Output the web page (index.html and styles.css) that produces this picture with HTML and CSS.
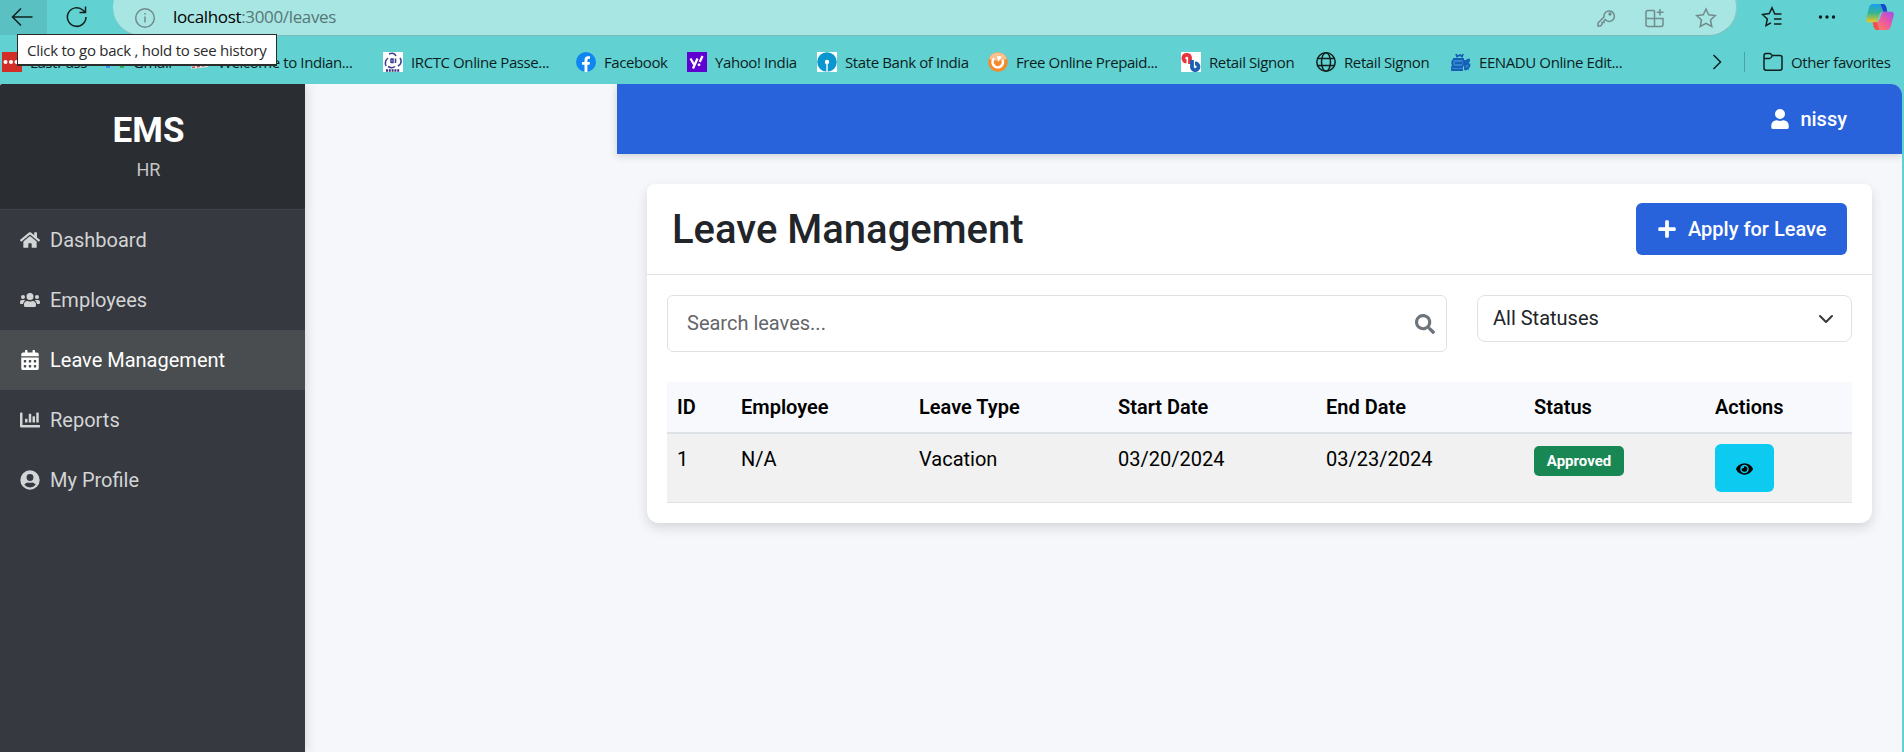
FILE: index.html
```html
<!DOCTYPE html>
<html lang="en">
<head>
<meta charset="utf-8">
<title>Leave Management</title>
<link rel="stylesheet" href="styles.css">
</head>
<body>
<div class="browser">
  <div class="toolbar">
    <div class="back"><svg width="22" height="22" viewBox="0 0 22 22" class="line"><path d="M21.500 11H2M10 2.500L1.500 11L10 19.500"/></svg></div>
    <svg class="reload line" width="22" height="22" viewBox="0 0 22 22"><path d="M20 11A9.300 9.300 0 1 1 17 4.200L19.200 6.200M19.500 .5V6.500H13.500"/></svg>
    <div class="address">
      <svg class="info" width="22" height="22" viewBox="0 0 22 22"><circle cx="11" cy="11" r="9.300"/><path d="M11 9.500V15.500M11 6V7.600"/></svg>
      <span class="url"><b>localhost</b>:3000/leaves</span>
      <div class="address-icons">
        <svg width="18" height="18" viewBox="0 0 18 18"><path d="M8.200 10.600L7 11.800V13.500H5V15.500L3.500 17H1V14L7 8A5.200 5.200 0 1 1 8.200 10.600Z"/><circle cx="13" cy="5" r=".9"/></svg>
        <svg width="20" height="20" viewBox="0 0 20 20"><path d="M9.500 2.500H3Q1 2.500 1 4.500V16.500Q1 18.500 3 18.500H16Q18 18.500 18 16.500V10.500H1M9.500 2.500V18.500M15 1V7.500M11.800 4.200H18.500"/></svg>
        <svg width="22" height="22" viewBox="0 0 22 22"><path d="M11 2L13.700 7.800L20.300 8.500L15.500 13L16.800 19.500L11 16.300L5.200 19.500L6.500 13L1.700 8.500L8.300 7.800Z"/></svg>
      </div>
    </div>
    <svg class="fav line" width="22" height="22" viewBox="0 0 22 22"><path d="M20.500 8H13.800L11 1.800L8.200 7.600L1.500 8.500L6.300 13L5 19.500L10 16.800M13 13H20.500M13 18H20.500"/></svg>
    <svg class="more" width="18" height="6" viewBox="0 0 18 6"><circle cx="2.500" cy="3" r="1.700"/><circle cx="9" cy="3" r="1.700"/><circle cx="15.500" cy="3" r="1.700"/></svg>
    <svg class="copilot" width="28" height="26" viewBox="0 0 29 27">
      <defs>
        <linearGradient id="ca" x1="0" y1="0" x2="0" y2="1"><stop offset="0" stop-color="#1b9df0"/><stop offset=".5" stop-color="#39b58f"/><stop offset="1" stop-color="#f5c620"/></linearGradient>
        <linearGradient id="cb" x1="1" y1="0" x2="0" y2="1"><stop offset="0" stop-color="#a04bf0"/><stop offset=".5" stop-color="#ef5a9c"/><stop offset="1" stop-color="#ff8a4a"/></linearGradient>
      </defs>
      <path d="M7 0H18Q20 0 21 3L22 8H18Q15 8 14 11L12 17Q11 19 9 19H3Q-1 19 .5 14L3 4Q4 0 7 0Z" fill="url(#ca)"/>
      <path d="M15 0H18Q20 0 21 3L22 8H18Z" fill="#1748c8"/>
      <path d="M22 27H11Q9 27 8 24L7 19H10Q13 19 14 16L16 10Q17 8 19 8H26Q30 8 28.500 13L26 22Q25 27 22 27Z" fill="url(#cb)"/>
      <path d="M14 27H11Q9 27 8 24L7 19H11Z" fill="#f0504a"/>
    </svg>
  </div>
  <div class="bookmarks">
    <div class="bm bm-lastpass"><svg width="20" height="20"><path fill="#d32d27" d="M0 0H20V20H0Z"/><g fill="#fff"><circle cx="3.500" cy="10" r="2"/><circle cx="9" cy="10" r="2"/><circle cx="14.500" cy="10" r="2"/></g></svg><span>LastPass</span></div>
    <div class="bm bm-gmail"><svg width="20" height="20"><path fill="#4285f4" d="M1 4H5V16H1Z"/><path fill="#34a853" d="M15 4H19V16H15Z"/><path fill="none" stroke="#ea4335" stroke-width="4" d="M2 5L10 11L18 5"/></svg><span>Gmail</span></div>
    <div class="bm bm-rail"><svg width="20" height="20"><path fill="#e8e0e0" d="M2 10L18 6V15L1 17Z"/><path stroke="#a55" stroke-width="1.500" stroke-dasharray="3 2" d="M2 15.500L18 13"/></svg><span>Welcome to Indian...</span></div>
    <div class="bm bm-irctc"><svg width="20" height="20"><path fill="#fff" d="M0 0H20V20H0Z"/><g fill="none" stroke="#3a3f92" stroke-width="1.500"><path d="M6 2Q11 0 13 4M3 14Q1 9 5 6M17 6Q20 11 15 14M5 14.500Q9 17 12 14.500"/><path d="M8 6.500V11M8 7H10V10.500H8M12.500 6.500V11"/></g><path stroke="#34347e" stroke-width="2.500" stroke-dasharray="2 .8" d="M3 18.500H17"/></svg><span>IRCTC Online Passe...</span></div>
    <div class="bm bm-fb"><svg width="20" height="20"><circle cx="10" cy="10" r="10" fill="#0f86f2"/><path fill="#fff" d="M8.500 20V12.800H6V10H8.500V8Q8.500 4.200 12 4.200H14V6.800H12.800Q11.400 6.800 11.400 8.300V10H14L13.500 12.800H11.400V20Z"/></svg><span>Facebook</span></div>
    <div class="bm bm-yahoo"><svg width="20" height="20"><path fill="#5f01d1" d="M0 0H20V20H0Z"/><path fill="none" stroke="#fff" stroke-width="2.300" d="M3.500 6.500L7 12.500M10.500 6.500L6 16.500M15.500 4L12.800 10"/><circle cx="12" cy="12.800" r="1.400" fill="#fff"/></svg><span>Yahoo! India</span></div>
    <div class="bm bm-sbi"><svg width="20" height="20"><path fill="#fff" d="M0 0H20V20H0Z"/><circle cx="10" cy="10" r="9.800" fill="#0a96cf"/><circle cx="10" cy="10" r="2.200" fill="#fff"/><path fill="#dff2fa" d="M9.200 11H10.800V20H9.200Z"/></svg><span>State Bank of India</span></div>
    <div class="bm bm-free"><svg width="20" height="20"><circle cx="10" cy="10" r="9.800" fill="#f58a2c"/><path fill="#fac08e" d="M1 7A9.500 9.500 0 0 1 19 7Q10 10 1 7Z"/><path fill="none" stroke="#fff" stroke-width="2.600" d="M6 6.500A5.200 5.200 0 1 0 14.500 8"/><path fill="#fff" d="M9 4L14 4.500L10 10Z"/></svg><span>Free Online Prepaid...</span></div>
    <div class="bm bm-retail1"><svg width="20" height="20"><path fill="#fff" d="M0 0H20V20H0Z"/><g fill="none" stroke-width="3.800"><path stroke="#e8333c" d="M5.500 9.500A3.300 3.300 0 1 1 9 5.500V12"/><path stroke="#1e5fb0" d="M11 8V14A3.300 3.300 0 1 0 14 11.500"/></g></svg><span>Retail Signon</span></div>
    <div class="bm bm-retail2"><svg width="20" height="20" class="globe"><circle cx="10" cy="10" r="9.200"/><ellipse cx="10" cy="10" rx="4.500" ry="9.200"/><path d="M1.800 6.500H18.200M1.800 13.500H18.200"/></svg><span>Retail Signon</span></div>
    <div class="bm bm-eenadu"><svg width="20" height="20"><path fill="#2f86cc" d="M2 7H12V18H2ZM14 8H18V18H14Z"/><g fill="none" stroke="#1560b6" stroke-width="1.800"><path d="M5 2L6 4.500L9 3L11 4.500L12 2M2 7H13M2 8Q0 12 3 15H11Q14 12 12 8M4 11H11M1 14V18H12M15 9Q19 6 18 9L15 12Q20 11 18 15L14 18M14 8V18"/></g></svg><span>EENADU Online Edit...</span></div>
    <svg class="chev line" width="10" height="16" viewBox="0 0 10 16"><path d="M1.500 1L8.500 8L1.500 15"/></svg>
    <i class="sep"></i>
    <div class="bm bm-other"><svg width="20" height="20" class="globe"><path d="M1 4Q1 1.500 3 1.500H7L9.500 3.500H17Q19 3.500 19 5.500V16Q19 18.200 17 18.200H3Q1 18.200 1 16ZM1 6.500H6.500Q8 6.500 9.500 3.500"/></svg><span>Other favorites</span></div>
  </div>
  <div class="tooltip"><span>Click to go back , hold to see history</span></div>
</div>
<div class="app">
  <aside class="sidebar">
    <div class="brand"><h1>EMS</h1><p>HR</p></div>
    <nav>
      <a><svg viewBox="0 0 576 512"><path d="M280 148L96 300v164a16 16 0 0 0 16 16h112a16 16 0 0 0 16-16v-96a16 16 0 0 1 16-16h64a16 16 0 0 1 16 16v96a16 16 0 0 0 16 16h112a16 16 0 0 0 16-16V300L296 148a12 12 0 0 0-16 0zM572 251l-84-69V44a12 12 0 0 0-12-12h-56a12 12 0 0 0-12 12v72L318 43a48 48 0 0 0-61 0L4 251a12 12 0 0 0-1 17l25 31a12 12 0 0 0 17 2L280 107a12 12 0 0 1 16 0l235 194a12 12 0 0 0 17-2l25-31a12 12 0 0 0-1-17z"/></svg>Dashboard</a>
      <a><svg viewBox="0 0 640 512"><path d="M96 224a64 64 0 1 0 0-128 64 64 0 0 0 0 128zm448 0a64 64 0 1 0 0-128 64 64 0 0 0 0 128zm32 32h-64c-18 0-34 7-45 18 40 22 69 62 75 110h66a32 32 0 0 0 32-32v-32a64 64 0 0 0-64-64zm-256 0a112 112 0 1 0 0-224 112 112 0 0 0 0 224zm77 32h-8a155 155 0 0 1-138 0h-8A115 115 0 0 0 128 403v29a48 48 0 0 0 48 48h288a48 48 0 0 0 48-48v-29a115 115 0 0 0-115-115zM173 274a64 64 0 0 0-45-18H64a64 64 0 0 0-64 64v32a32 32 0 0 0 32 32h66c6-48 35-88 75-110z"/></svg>Employees</a>
      <a class="active"><svg viewBox="0 0 448 512"><path fill-rule="evenodd" d="M0 464a48 48 0 0 0 48 48h352a48 48 0 0 0 48-48V192H0zM320 268a12 12 0 0 1 12-12h40a12 12 0 0 1 12 12v40a12 12 0 0 1-12 12h-40a12 12 0 0 1-12-12zm0 128a12 12 0 0 1 12-12h40a12 12 0 0 1 12 12v40a12 12 0 0 1-12 12h-40a12 12 0 0 1-12-12zM192 268a12 12 0 0 1 12-12h40a12 12 0 0 1 12 12v40a12 12 0 0 1-12 12h-40a12 12 0 0 1-12-12zm0 128a12 12 0 0 1 12-12h40a12 12 0 0 1 12 12v40a12 12 0 0 1-12 12h-40a12 12 0 0 1-12-12zM64 268a12 12 0 0 1 12-12h40a12 12 0 0 1 12 12v40a12 12 0 0 1-12 12H76a12 12 0 0 1-12-12zm0 128a12 12 0 0 1 12-12h40a12 12 0 0 1 12 12v40a12 12 0 0 1-12 12H76a12 12 0 0 1-12-12zM400 64h-48V16a16 16 0 0 0-16-16h-32a16 16 0 0 0-16 16v48H160V16a16 16 0 0 0-16-16h-32a16 16 0 0 0-16 16v48H48a48 48 0 0 0-48 48v48h448v-48a48 48 0 0 0-48-48z"/></svg>Leave Management</a>
      <a><svg viewBox="0 0 512 512"><path d="M333 320h38a13 13 0 0 0 13-13V173a13 13 0 0 0-13-13h-38a13 13 0 0 0-13 13v134a13 13 0 0 0 13 13zm96 0h38a13 13 0 0 0 13-13V77a13 13 0 0 0-13-13h-38a13 13 0 0 0-13 13v230a13 13 0 0 0 13 13zm-288 0h38a13 13 0 0 0 13-13v-70a13 13 0 0 0-13-13h-38a13 13 0 0 0-13 13v70a13 13 0 0 0 13 13zm96 0h38a13 13 0 0 0 13-13V109a13 13 0 0 0-13-13h-38a13 13 0 0 0-13 13v198a13 13 0 0 0 13 13zm259 64H64V80a16 16 0 0 0-16-16H16A16 16 0 0 0 0 80v336a32 32 0 0 0 32 32h464a16 16 0 0 0 16-16v-32a16 16 0 0 0-16-16z"/></svg>Reports</a>
      <a><svg viewBox="0 0 496 512"><path d="M248 8a248 248 0 1 0 0 496 248 248 0 0 0 0-496zm0 96a88 88 0 1 1 0 176 88 88 0 0 1 0-176zm0 344a192 192 0 0 1-146-68c18-35 55-60 97-60 6 0 22 8 49 8s43-8 49-8c43 0 79 25 97 60a192 192 0 0 1-146 68z"/></svg>My Profile</a>
    </nav>
  </aside>
  <main class="main">
    <header class="navbar"><svg viewBox="0 0 448 512"><path d="M224 256a128 128 0 1 0 0-256 128 128 0 0 0 0 256zm90 32h-17a174 174 0 0 1-146 0h-17A134 134 0 0 0 0 422v42a48 48 0 0 0 48 48h352a48 48 0 0 0 48-48v-42a134 134 0 0 0-134-134z"/></svg>nissy</header>
    <section class="card">
      <div class="card-head">
        <h2>Leave Management</h2>
        <button class="apply"><svg viewBox="0 0 448 512"><path d="M416 208H272V64a32 32 0 0 0-32-32h-32a32 32 0 0 0-32 32v144H32a32 32 0 0 0-32 32v32a32 32 0 0 0 32 32h144v144a32 32 0 0 0 32 32h32a32 32 0 0 0 32-32V304h144a32 32 0 0 0 32-32v-32a32 32 0 0 0-32-32z"/></svg>Apply for Leave</button>
      </div>
      <div class="card-body">
        <div class="filters">
          <div class="search"><span>Search leaves...</span><svg viewBox="0 0 512 512"><path fill-rule="evenodd" d="M505 443L405 343c-4-4-11-7-17-7h-16a208 208 0 1 0-36 36v16c0 6 3 13 7 17l100 100a24 24 0 0 0 34 0l28-28a24 24 0 0 0 0-34zM208 336a128 128 0 1 1 0-256 128 128 0 0 1 0 256z"/></svg></div>
          <div class="select"><span>All Statuses</span><svg viewBox="0 0 16 16"><path d="m2 5 6 6 6-6"/></svg></div>
        </div>
        <table>
          <colgroup><col class="c1"><col class="c2"><col class="c3"><col class="c4"><col class="c5"><col class="c6"><col class="c7"></colgroup>
          <thead><tr><th>ID</th><th>Employee</th><th>Leave Type</th><th>Start Date</th><th>End Date</th><th>Status</th><th>Actions</th></tr></thead>
          <tbody><tr><td>1</td><td>N/A</td><td>Vacation</td><td>03/20/2024</td><td>03/23/2024</td><td><span class="badge">Approved</span></td><td class="act"><button class="view"><svg viewBox="0 0 576 512"><path fill-rule="evenodd" d="M572 241C518 136 411 64 288 64S58 136 4 241a32 32 0 0 0 0 29c54 106 161 178 284 178s230-72 284-177a32 32 0 0 0 0-30zM288 400a144 144 0 1 1 0-288 144 144 0 0 1 0 288z"/><path d="M288 160a95 95 0 0 0-25 4 48 48 0 0 1-67 67 96 96 0 1 0 92-71z"/></svg></button></td></tr></tbody>
        </table>
      </div>
    </section>
  </main>
</div>
</body>
</html>
```
FILE: styles.css
```css
* { box-sizing: border-box; }
body { margin: 0; width: 1904px; height: 752px; overflow: hidden; background: #62d1d1; font-family: Roboto, "Liberation Sans", sans-serif; font-size: 20px; color: #212529; }
h1, h2, p { margin: 0; }
button { border: 0; font: inherit; }
svg { display: block; flex: none; fill: currentColor; }
svg.line, svg.globe { fill: none; stroke: #10201f; stroke-width: 1.5; }

.browser { position: relative; height: 84px; font-family: "Open Sans", "Noto Sans", sans-serif; color: #0c1f1f; }
.toolbar { display: flex; height: 36px; }
.back { width: 47px; height: 35px; padding: 6px 0 0 11px; background: #5bc0c1; }
.reload { margin: 6px 0 0 19px; }
.address { display: flex; align-items: center; width: 1624px; height: 57px; margin: -21px 0 0 25px; padding: 21px 19px 0 21px; background: #a8e6e4; border-bottom: 1px solid #80bcbb; border-right: 1px solid #8cc9c8; border-radius: 28px; }
.info, .address-icons svg { fill: none; stroke: #708b8a; stroke-width: 1.5; }
.url { margin-left: 17px; padding-bottom: 1px; font-size: 17px; line-height: 22px; letter-spacing: -.34px; color: #577776; }
.url b { font-weight: 400; color: #000; }
.address-icons { display: flex; align-items: center; gap: 30px; margin-left: auto; }
.fav { margin: 6px 0 0 24px; }
.more { margin: 14px 0 0 35px; }
.copilot { margin: 4px 0 0 30px; }

.bookmarks { display: flex; height: 48px; padding: 3px 0 0 2px; align-items: center; font-size: 15px; }
.bm { display: flex; align-items: center; gap: 8px; flex: none; white-space: nowrap; letter-spacing: -.4px; }
.bm span { line-height: 20px; }
.bm-lastpass { width: 103px; }
.bm-gmail { width: 85px; }
.bm-rail { width: 193px; }
.bm-irctc { width: 193px; }
.bm-fb { width: 111px; }
.bm-yahoo { width: 130px; }
.bm-sbi { width: 171px; }
.bm-free { width: 193px; }
.bm-retail1 { width: 135px; }
.bm-retail2 { width: 135px; }
.bm-eenadu { width: 261px; }
.sep { width: 1px; height: 20px; margin: 0 18px 0 22px; background: #4ba0a0; }
.tooltip { position: absolute; left: 17px; top: 34px; width: 260px; height: 32px; padding-left: 9px; background: #fff; border: 1px solid #2b2b2b; border-bottom-width: 2px; font-size: 15px; line-height: 30px; letter-spacing: -.25px; white-space: nowrap; color: #2b2b2b; }

.app { display: flex; width: 1902px; height: 668px; background: #f5f7fb; border-radius: 3px 11px 0 0; overflow: hidden; }
.sidebar { width: 305px; background: #363940; box-shadow: 2px 0 10px rgba(0,0,0,.12); }
.brand { height: 126px; padding: 26px 8px 0 0; background: #2a2d31; border-bottom: 1px solid #404348; text-align: center; }
.brand h1 { font-size: 35px; line-height: 42px; font-weight: 700; color: #fff; }
.brand p { margin-top: 7px; font-size: 18px; line-height: 22px; color: #c5c6c7; }
.sidebar a { display: flex; align-items: center; gap: 10px; height: 60px; padding-left: 20px; color: #d3d4d5; }
.sidebar a svg { width: 20px; height: 20px; }
.sidebar .active { background: #494d50; color: #fff; }
.sidebar nav a:nth-child(2) svg { height: 16px; }
.sidebar nav a:first-child svg { height: 18px; }

.main { width: 1285px; margin-left: 312px; }
.navbar { display: flex; align-items: center; justify-content: flex-end; gap: 11px; height: 70px; padding-right: 55px; background: #2963dc; box-shadow: 0 2px 8px rgba(0,0,0,.16); color: #fff; font-weight: 500; }
.navbar svg { width: 18px; height: 20px; }
.card { width: 1225px; height: 339px; margin: 30px 0 0 30px; background: #fff; border-radius: 8px 8px 12px 12px; box-shadow: 0 5px 12px rgba(0,0,0,.13); }
.card-head { display: flex; align-items: center; justify-content: space-between; height: 91px; padding: 0 25px; border-bottom: 1px solid #dfe0e2; }
.card-head h2 { padding-top: 2px; font-size: 40px; line-height: 48px; font-weight: 500; }
.apply { display: flex; align-items: center; gap: 12px; width: 211px; height: 52px; padding: 0 0 0 22px; border-radius: 6px; background: #2963dc; color: #fff; font-weight: 500; white-space: nowrap; }
.apply svg { width: 18px; height: 20px; }
.card-body { padding: 20px; }
.filters { display: flex; gap: 30px; height: 57px; margin-bottom: 30px; }
.search, .select { display: flex; align-items: center; justify-content: space-between; border: 1px solid #dee2e6; }
.search { width: 780px; padding: 0 11px 0 19px; border-radius: 6px; color: #636669; }
.search span, .select span { padding-bottom: 2px; }
.search svg { width: 20px; height: 20px; color: #6c757d; }
.select { width: 375px; height: 47px; padding: 0 17px 0 15px; border-radius: 8px; }
.select svg { width: 16px; height: 16px; fill: none; stroke: #343a40; stroke-width: 2; stroke-linecap: round; stroke-linejoin: round; }
table { width: 1185px; border-collapse: separate; border-spacing: 0; table-layout: fixed; color: #000; }
.c1 { width: 64px; } .c2 { width: 178px; } .c3 { width: 199px; } .c4 { width: 208px; } .c5 { width: 208px; } .c6 { width: 181px; } .c7 { width: 147px; }
th { height: 52px; padding: 0 10px; text-align: left; font-weight: 600; background: #f8f9fc; border-bottom: 2px solid #dee2e6; }
td { height: 69px; padding: 10px 10px 0; line-height: 30px; vertical-align: top; background: #f1f1f1; border-bottom: 1px solid #dee2e6; }
.badge { display: block; width: 90px; height: 30px; margin-top: 2px; border-radius: 5px; background: #198754; color: #fff; font-size: 15px; font-weight: 700; text-align: center; }
.view { display: flex; align-items: center; justify-content: center; width: 59px; height: 48px; padding: 2px 0 0; border-radius: 6px; background: #0dcaf0; color: #000; }
.view svg { width: 17px; height: 16px; }
```
